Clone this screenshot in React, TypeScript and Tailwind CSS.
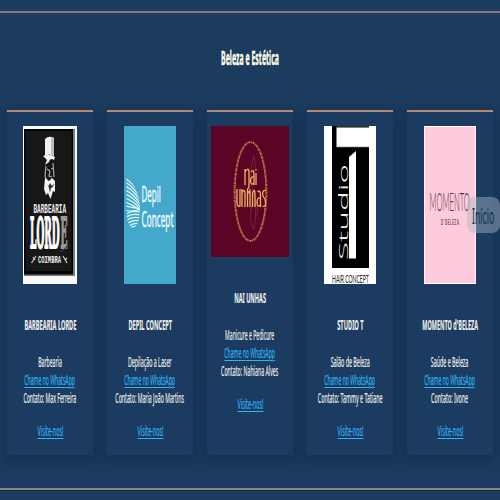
import { useLayoutEffect, useRef, useState } from "react";
import type { ReactNode } from "react";

// Horizontally condensed text that fills exactly `width` pixels.
function Condensed({ text, width, className = "" }: { text: string; width: number; className?: string }) {
  const ref = useRef<HTMLSpanElement>(null);
  const [scale, setScale] = useState(0.55);
  useLayoutEffect(() => {
    if (ref.current) setScale(width / ref.current.offsetWidth);
  }, [width, text]);
  return (
    <span className="flex justify-center" style={{ width }}>
      <span
        ref={ref}
        className={"block shrink-0 origin-center whitespace-nowrap " + className}
        style={{ transform: `scaleX(${scale})` }}
      >
        {text}
      </span>
    </span>
  );
}

function LordeLogo() {
  return (
    <svg className="h-[158px] w-[54px]" viewBox="0 0 54 158">
      <rect width="54" height="158" fill="#fafafa" />
      <rect x="1" y="3" width="51" height="147" fill="#777b7e" />
      <rect x="1" y="3" width="49" height="145.5" fill="#050505" />
      <rect x="2.5" y="5" width="46" height="140" fill="#171717" />
      <path d="M22 13 Q26 9 31 12 L31 30 Q26 27 22 30Z" fill="#f1f1f1" />
      <path d="M28 11 L31 13 V29 L28 28Z" fill="#bcbcbc" />
      <path d="M20 30 Q26 27 32 31 L31 34 Q27 31 26 36 L22 39 L24 34Z" fill="#f4f4f4" />
      <path d="M23 40 L22 50 L24 55 M30 37 L31 51 M24 43 L27 45 M28 43 L31 42 M27 45 L26 50 L29 51" stroke="#aaa" strokeWidth="1.2" fill="none" />
      <path d="M22 52 L26 55 L29 52 L32 55 L32 66 L30 65 L27.5 73 L25 67 L23 69 L21 63Z" fill="#f4f4f4" />
      <path d="M24 57 L25.500 60 L27 57 L29 60 L31 57 L30 61 L28 62 L27 67 L26 62Z" fill="#333" />
      <g fontFamily="'Liberation Mono', monospace" fontWeight="700" fill="#eee">
        <text transform="translate(10.500 87) scale(.5 1)" fontSize="12" textLength="65" lengthAdjust="spacingAndGlyphs">BARBEARIA</text>
        <text transform="translate(15 137) scale(.5 1)" fontSize="10.500" textLength="46" lengthAdjust="spacingAndGlyphs">COIMBRA</text>
      </g>
      <g fontFamily="'DejaVu Serif', serif" fontWeight="700" fontSize="43" strokeWidth="2">
        <text transform="translate(7 122) scale(.24 1)" textLength="124" lengthAdjust="spacingAndGlyphs" fill="#fff" stroke="#fff">LORD</text>
        <text transform="translate(37.500 122) scale(.24 1)" textLength="29" lengthAdjust="spacingAndGlyphs" fill="#999" stroke="#999">E</text>
      </g>
      <path d="M37 126 Q43 124 45 118 M39 125 L46 119" stroke="#34404a" strokeWidth="1" fill="none" />
      <path d="M8.500 137 L13 130 M10 131 L12 134 M40 130 L44 137 M42 134 L44 132" stroke="#ccc" strokeWidth="1.2" />
    </svg>
  );
}

function DepilLogo() {
  return (
    <svg className="h-[158px] w-[52px]" viewBox="0 0 52 158">
      <defs>
        <clipPath id="drop">
          <path d="M2.300 50 Q16 64 16 84 Q15 101 9 102 Q3 101 2.300 84Z" />
        </clipPath>
      </defs>
      <rect width="52" height="158" fill="#43a8c9" />
      <g clipPath="url(#drop)" fill="none" stroke="#e2f5fa" strokeWidth="1.250">
        <path d="M1 52 Q10 58 17 70 M1 56 Q10 61 17 73 M1 60 Q10 64 17 76 M1 64 Q10 68 17 79 M1 68 Q10 71 17 82 M1 72 Q10 75 17 84 M1 76 Q10 79 17 85 M1 80 Q10 82 17 83 M1 84 Q10 87 17 82" />
        <path d="M3 88 Q6 84 17 86 M3 91 Q7 87 17 89 M3 94 Q8 90 17 92 M4 97 Q9 93 17 95 M5 100 Q10 96 16 98 M6 102 Q11 99 15 101" />
      </g>
      <g fontFamily="'Noto Sans', sans-serif" fill="#eefaff" fontSize="22.500" stroke="#eefaff" strokeWidth=".5">
        <text transform="translate(17.500 75.500) scale(.42 1)" textLength="46" lengthAdjust="spacingAndGlyphs">Depil</text>
        <text transform="translate(17.500 101) scale(.42 1)" textLength="76" lengthAdjust="spacingAndGlyphs">Concept</text>
      </g>
    </svg>
  );
}

function NaiLogo() {
  return (
    <svg className="h-[131px] w-[78px]" viewBox="0 0 78 131">
      <rect width="78" height="131" fill="#5b0426" />
      <ellipse cx="39.500" cy="65.500" rx="16" ry="49.500" fill="none" stroke="#a8653f" strokeWidth="2" strokeDasharray="2 .9 1 .6" />
      <ellipse cx="39.500" cy="65.500" rx="15.500" ry="49" fill="none" stroke="#d29a5e" strokeWidth=".6" strokeDasharray="3 1" />
      <path d="M43 29 Q37 48 42 65 T43 103 Q37 95 41 79 Q48 73 46 90 M43 31 Q47 44 39 57" fill="none" stroke="#873039" strokeWidth=".7" />
      <g fill="none" stroke="#efb45f" strokeWidth="1.300">
        <path d="M34 59 V43 M34 46 Q38 40 38 47 V59 Q38 63 36 63 M45 59 V47 M45 43 V44.500 M40 46 Q43 42 43 50 V59 M43 51 Q39.500 50 39.500 55 Q40 60 43 57" />
        <path d="M26 63 V75 Q26 82 29 80 V63 M31 81 V63 M31 67 Q34 61 34 69 V81 M36.500 63 V81 M39 63 V81 M36.500 68 Q39 62 39 71 M41.500 81 V67 Q44 61 44 69 V81 M46.500 66 Q49.500 63 49.500 70 V81 M49.500 72 Q46 71 46 77 Q46.500 82 49.500 79 M55 65 Q52 63 51.500 68 Q52 71 54 73 Q56 82 51.500 80" />
      </g>
    </svg>
  );
}

function StudioLogo() {
  return (
    <svg className="h-[158px] w-[52px]" viewBox="0 0 52 158">
      <rect width="52" height="158" fill="#fff" />
      <rect x="8" width="37" height="142" fill="#000" />
      <rect x="12.500" y="1.500" width="32.500" height="19.500" fill="#fff" />
      <path d="M12.500 1 H45 M12.500 21 H45" stroke="#888" strokeWidth=".7" />
      <path d="M25 132.500 V31 L32 25 V132.500Z" fill="#fff" />
      <text
        transform="translate(24 134) rotate(-90)"
        fontFamily="'Noto Sans', sans-serif"
        fontWeight="300"
        fontSize="12.500"
        textLength="96"
        lengthAdjust="spacingAndGlyphs"
        fill="#ededed"
      >
        Studio
      </text>
      <text transform="translate(8 157) scale(.55 1)" fontFamily="Lato, sans-serif" fontSize="10.500" textLength="67" lengthAdjust="spacingAndGlyphs" fill="#222">
        HAIR CONCEPT
      </text>
    </svg>
  );
}

function MomentoLogo() {
  return (
    <svg className="h-[158px] w-[52px]" viewBox="0 0 52 158">
      <rect width="52" height="158" fill="#fff" />
      <rect x=".7" y="1" width="50.600" height="156" fill="#fdcbdc" />
      <text transform="translate(5.500 85) scale(.32 1)" fontFamily="Lato, sans-serif" fontWeight="300" fontSize="25" textLength="126" lengthAdjust="spacingAndGlyphs" fill="#4b303b">
        MOMENTO
      </text>
      <text transform="translate(17 98.500) scale(.4 1)" fontFamily="Lato, sans-serif" fontWeight="700" fontSize="7" letterSpacing="1" textLength="46" lengthAdjust="spacing" fill="#59404b">
        D'BELEZA
      </text>
    </svg>
  );
}

type Shop = {
  logo: ReactNode;
  name: [string, number];
  kind: [string, number];
  contact: [string, number];
};

const shops: Shop[] = [
  { logo: <LordeLogo />, name: ["BARBEARIA LORDE", 52], kind: ["Barbearia", 23.5], contact: ["Contato: Max Ferreira", 53] },
  { logo: <DepilLogo />, name: ["DEPIL CONCEPT", 43.5], kind: ["Depilação a Laser", 43.5], contact: ["Contato: Maria João Martins", 68.5] },
  { logo: <NaiLogo />, name: ["NAI UNHAS", 31.5], kind: ["Manicure e Pedicure", 49], contact: ["Contato: Nahiana Alves", 57] },
  { logo: <StudioLogo />, name: ["STUDIO T", 26.5], kind: ["Salão de Beleza", 39], contact: ["Contato: Tammy e Tatiane", 64.5] },
  { logo: <MomentoLogo />, name: ["MOMENTO d'BELEZA", 55.5], kind: ["Saúde e Beleza", 37.5], contact: ["Contato: Ivone", 37] },
];

const linkStyle = "text-[#31b4f4] underline decoration-1 underline-offset-2";

function Card({ shop }: { shop: Shop }) {
  return (
    <article className="flex h-[345px] w-[86px] flex-col items-center border-t-2 border-[#b98a6a] bg-[#1b3b60] pt-[14px] shadow-[0_5px_12px_2px_rgba(8,25,43,0.32)] [-webkit-text-stroke:0.2px_currentColor]">
      {shop.logo}
      <h3 className="mt-8 font-bold">
        <Condensed text={shop.name[0]} width={shop.name[1]} className="text-sm leading-[18px]" />
      </h3>
      <div className="mt-[19px] flex flex-col items-center">
        <Condensed text={shop.kind[0]} width={shop.kind[1]} />
        <a href="#whatsapp">
          <Condensed text="Chame no WhatsApp" width={50.5} className={linkStyle} />
        </a>
        <Condensed text={shop.contact[0]} width={shop.contact[1]} />
      </div>
      <a href="#visite" className="mt-[15px]">
        <Condensed text="Visite-nos!" width={26} className={linkStyle} />
      </a>
    </article>
  );
}

export default function App() {
  return (
    <main className="relative h-[500px] w-[500px] overflow-hidden bg-[#1b3b5f] pt-[11px] font-['Noto_Sans',sans-serif] text-[13.500px] leading-[18px] text-[#eeeee8]">
      <section className="h-[479px] border-y-2 border-t-[#8c7777] border-b-[#8b8580] shadow-[0_1px_1px_#132b43]">
        <h2 className="flex h-[97px] justify-center pt-[31px] font-bold text-[#fffff0] [-webkit-text-stroke:0.5px_currentColor]">
          <Condensed text="Beleza e Estética" width={58} className="text-xl leading-[27px] [text-shadow:1px_1px_1px_#102337]" />
        </h2>
        <div className="flex gap-[14px] pl-[7px]">
          {shops.map((shop) => (
            <Card key={shop.name[0]} shop={shop} />
          ))}
        </div>
      </section>
      <button className="absolute left-[467px] top-[197px] flex h-9 w-[33px] items-center justify-center rounded-lg bg-[#a9b9c7]/45 text-[#183754]">
        <Condensed text="Início" width={22} className="text-[22px] leading-9 [-webkit-text-stroke:0.2px_currentColor]" />
      </button>
    </main>
  );
}
